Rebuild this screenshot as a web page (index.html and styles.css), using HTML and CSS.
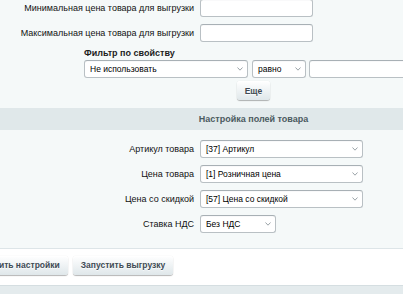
FILE: index.html
```html
<!DOCTYPE html>
<html lang="ru">
<head>
<meta charset="utf-8">
<title>Выгрузка</title>
<link rel="stylesheet" href="styles.css">
</head>
<body>
<div class="page">
  <div class="content">
    <div class="rows top-rows">
      <div class="row">
        <div class="lbl">Минимальная цена товара для выгрузки</div>
        <div class="field"><div class="input w113"></div></div>
      </div>
      <div class="row">
        <div class="lbl">Максимальная цена товара для выгрузки</div>
        <div class="field"><div class="input w113"></div></div>
      </div>
    </div>

    <div class="filter">
      <div class="filter-title">Фильтр по свойству</div>
      <div class="filter-controls">
        <div class="select w164"><span>Не использовать</span><svg class="chev" width="6" height="4" viewBox="0 0 6 4"><polyline points="0.5,0.5 3,3.2 5.5,0.5"/></svg></div>
        <div class="select w54"><span>равно</span><svg class="chev" width="6" height="4" viewBox="0 0 6 4"><polyline points="0.5,0.5 3,3.2 5.5,0.5"/></svg></div>
        <div class="input w114"></div>
      </div>
      <button class="btn btn-more">Еще</button>
    </div>

    <div class="heading">Настройка полей товара</div>

    <div class="rows section-rows">
      <div class="row">
        <div class="lbl">Артикул товара</div>
        <div class="field"><div class="select w163"><span>[37] Артикул</span><svg class="chev" width="6" height="4" viewBox="0 0 6 4"><polyline points="0.5,0.5 3,3.2 5.5,0.5"/></svg></div></div>
      </div>
      <div class="row">
        <div class="lbl">Цена товара</div>
        <div class="field"><div class="select w163"><span>[1] Розничная цена</span><svg class="chev" width="6" height="4" viewBox="0 0 6 4"><polyline points="0.5,0.5 3,3.2 5.5,0.5"/></svg></div></div>
      </div>
      <div class="row">
        <div class="lbl">Цена со скидкой</div>
        <div class="field"><div class="select w163"><span>[57] Цена со скидкой</span><svg class="chev" width="6" height="4" viewBox="0 0 6 4"><polyline points="0.5,0.5 3,3.2 5.5,0.5"/></svg></div></div>
      </div>
      <div class="row">
        <div class="lbl">Ставка НДС</div>
        <div class="field"><div class="select w76"><span>Без НДС</span><svg class="chev" width="6" height="4" viewBox="0 0 6 4"><polyline points="0.5,0.5 3,3.2 5.5,0.5"/></svg></div></div>
      </div>
    </div>
  </div>

  <div class="btns">
    <button class="btn">Сохранить настройки</button>
    <button class="btn">Запустить выгрузку</button>
  </div>
  <div class="footer"></div>
</div>
</body>
</html>
```

FILE: styles.css
```css
* { box-sizing: border-box; }

html, body {
  margin: 0;
  padding: 0;
}

body {
  width: 403px;
  height: 294px;
  overflow: hidden;
  background: #f5f9f9;
  font-family: "Liberation Sans", Arial, sans-serif;
  font-size: 9px;
  color: #000;
}

.page {
  margin-left: -60px;
  width: 627px;
}

.content {
  background: #f5f9f9;
  padding-bottom: 15px;
  margin-top: -1px;
}

.rows {
  display: flex;
  flex-direction: column;
  gap: 7px;
}

.row {
  display: grid;
  grid-template-columns: 254px 1fr;
  column-gap: 6px;
  align-items: center;
  height: 18px;
}

.lbl {
  text-align: right;
  white-space: nowrap;
  color: #111;
}

.field {
  display: flex;
  align-items: center;
}

.input,
.select {
  height: 18px;
  background: #fff;
  border: 1px solid #b9c0c4;
  border-top-color: #a8b0b5;
  border-radius: 3px;
  box-shadow: inset 0 1px 1px -1px rgba(150, 160, 165, 0.6);
}

.select {
  display: flex;
  align-items: center;
  justify-content: space-between;
  padding: 0 4px 0 5px;
  white-space: nowrap;
  color: #000;
  font-size: 8.5px;
}

.chev {
  flex: none;
  fill: none;
  stroke: #8f999e;
  stroke-width: 0.9;
}

.w113 { width: 113px; }
.w114 { width: 114px; }
.w164 { width: 164px; }
.w54 { width: 54px; }
.w163 { width: 163px; }
.w76 { width: 76px; }

.filter {
  width: 339px;
  margin: 6px auto 0;
  display: flex;
  flex-direction: column;
  align-items: center;
}

.filter-title {
  align-self: flex-start;
  font-weight: bold;
  line-height: 10px;
  color: #1d1d1d;
}

.filter-controls {
  margin-top: 2px;
  display: flex;
  gap: 3px;
  align-self: stretch;
}

.filter-controls .select:first-child { margin-right: 1px; }

.btn {
  font-family: "Liberation Sans", Arial, sans-serif;
  font-size: 8.5px;
  font-weight: bold;
  color: #3f4b54;
  height: 19px;
  padding: 0 8px 1px;
  border: none;
  border-radius: 3px;
  background: linear-gradient(to bottom, #ffffff, #dfe7ea);
  box-shadow: 0 0 1px rgba(0, 0, 0, 0.15), 0 1px 1px rgba(0, 0, 0, 0.28), inset 0 1px #fff;
  text-shadow: 0 1px rgba(255, 255, 255, 0.7);
  white-space: nowrap;
}

.btn-more {
  margin-top: 3px;
  width: 33px;
  padding: 0;
}

.heading {
  margin-top: 8px;
  height: 22px;
  line-height: 22px;
  background: #e0e8ea;
  text-align: center;
  font-weight: bold;
  color: #4b5a60;
}

.section-rows {
  margin-top: 10px;
}

.btns {
  background: #fff;
  border-top: 1px solid #dde5e8;
  padding: 7px 0 10px 20px;
  display: flex;
  gap: 5px;
}

.footer {
  height: 12px;
  background: #e4ebed;
  border-top: 1px solid #d5dee1;
}
```
